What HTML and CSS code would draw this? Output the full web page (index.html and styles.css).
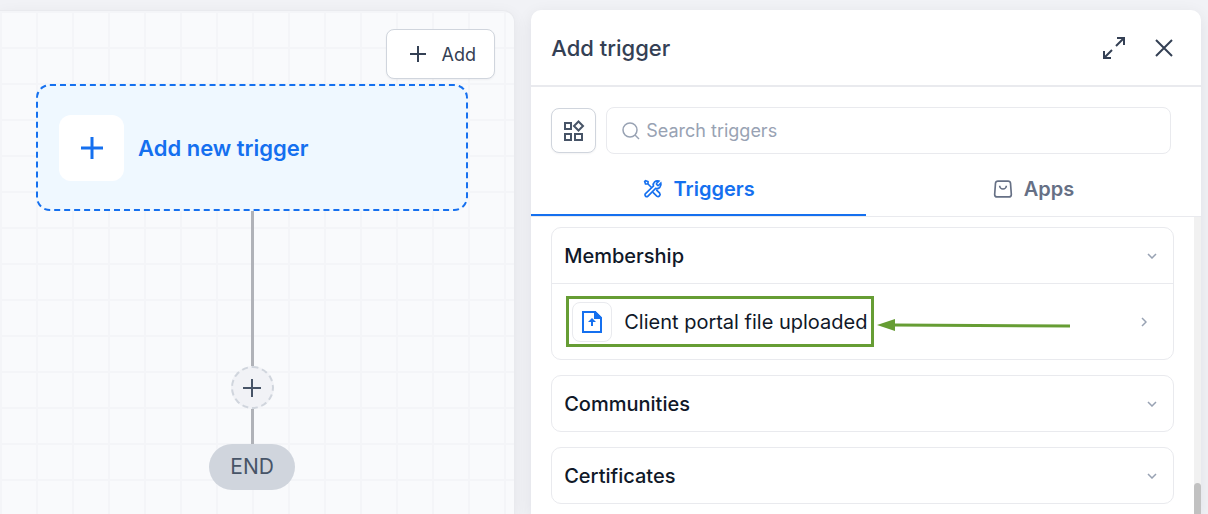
FILE: index.html
```html
<!DOCTYPE html>
<html lang="en">
<head>
  <meta charset="UTF-8" />
  <meta name="viewport" content="width=device-width, initial-scale=1" />
  <title>Workflow Builder</title>
  <link rel="stylesheet" href="styles.css">
</head>
<body>

  <main class="canvas">
    <button class="btn add-btn" type="button">
      <svg width="18" height="18" viewBox="0 0 18 18"><path d="M9 1v16M1 9h16"/></svg>
      Add
    </button>

    <div class="flow">
      <button class="trigger-node" type="button">
        <span class="node-icon">
          <svg width="22" height="22" viewBox="0 0 22 22"><path d="M11 0v22M0 11h22"/></svg>
        </span>
        Add new trigger
      </button>
      <span class="line line-long"></span>
      <button class="step-btn" type="button" aria-label="Add step">
        <svg width="20" height="20" viewBox="0 0 20 20"><path d="M10 1v18M1 10h18"/></svg>
      </button>
      <span class="line line-short"></span>
      <span class="end-node">END</span>
    </div>
  </main>

  <aside class="panel">
    <header class="panel-header">
      <h1>Add trigger</h1>
      <button class="icon-btn" type="button" aria-label="Expand">
        <svg width="22" height="22" viewBox="0 0 22 22"><path d="M13 9l8-8M14 1h7v7M9 13l-8 8M1 14v7h7"/></svg>
      </button>
      <button class="icon-btn" type="button" aria-label="Close">
        <svg width="18" height="18" viewBox="0 0 18 18"><path d="M1 1l16 16M17 1L1 17"/></svg>
      </button>
    </header>

    <div class="search-row">
      <button class="btn filter-btn" type="button" aria-label="Filter by category">
        <svg width="22" height="22" viewBox="0 0 22 22"><path d="M2 3h6v6H2zM2 14h6v6H2zM12 14h7v6h-7zM15.500 1.500L20 6l-4.500 4.500L11 6z"/></svg>
      </button>
      <label class="search">
        <svg width="18" height="18" viewBox="0 0 18 18"><circle cx="8" cy="8" r="7"/><path d="M13 13l4 4"/></svg>
        <input type="text" placeholder="Search triggers" aria-label="Search triggers" />
      </label>
    </div>

    <nav class="tabs">
      <button class="tab active" type="button">
        <svg width="20" height="20" viewBox="0 0 24 24"><path d="M6 6l4.500 4.500M6 6H3L2 3l1-1 3 1v3zM19 2.500l-2.600 2.600a1 1 0 0 0 0 1.400l1 1a1 1 0 0 0 1.400 0l2.600-2.600a5 5 0 0 1-6.300 6.300L6 20.500a2.100 2.100 0 0 1-3-3L12.500 8.500A5 5 0 0 1 19 2.500zM12 16l4.500 4.500a2.500 2.500 0 0 0 3.500-3.500L16 13"/></svg>
        Triggers
      </button>
      <button class="tab" type="button">
        <svg width="20" height="20" viewBox="0 0 24 24"><path d="M16 8a4 4 0 0 1-8 0M6 2.500h12a3 3 0 0 1 3 2.500l1 13.500a3 3 0 0 1-3 3H5a3 3 0 0 1-3-3L3 5a3 3 0 0 1 3-2.500z"/></svg>
        Apps
      </button>
    </nav>

    <div class="panel-body">
      <div class="groups">
        <section class="group">
          <button class="group-title" type="button">
            Membership
            <svg width="10" height="6" viewBox="0 0 10 6"><path d="M1 1l4 4 4-4"/></svg>
          </button>
          <div class="group-item">
            <button class="item-btn" type="button">
              <span class="item-icon">
                <svg width="20" height="22" viewBox="0 0 20 22"><path d="M1 1h12l6 6v14H1z"/><path class="fold" d="M13 1v6h6z"/><path d="M10 15V9"/><path class="tip" d="M6 11l4-4 4 4z"/></svg>
              </span>
              Client portal file uploaded
            </button>
            <svg class="arrow" width="194" height="14" viewBox="0 0 194 14"><path class="head" d="M0 6L18 0v12z"/><path class="shaft" d="M17 6l176 1"/></svg>
            <svg class="next" width="6" height="10" viewBox="0 0 6 10"><path d="M1 1l4 4-4 4"/></svg>
          </div>
        </section>

        <section class="group">
          <button class="group-title" type="button">
            Communities
            <svg width="10" height="6" viewBox="0 0 10 6"><path d="M1 1l4 4 4-4"/></svg>
          </button>
        </section>

        <section class="group">
          <button class="group-title" type="button">
            Certificates
            <svg width="10" height="6" viewBox="0 0 10 6"><path d="M1 1l4 4 4-4"/></svg>
          </button>
        </section>
      </div>
      <div class="scrollbar"><span class="thumb"></span></div>
    </div>
  </aside>

</body>
</html>
```

FILE: styles.css
```css
:root {
  --page: #f1f2f6;
  --canvas: #f9fafc;
  --grid: #f4f5f8;
  --line: #e9eaee;
  --border: #d0d5dd;
  --text: #101828;
  --text-mid: #344054;
  --muted: #667085;
  --placeholder: #98a2b3;
  --accent: #1570ef;
  --accent-bg: #eff8ff;
  --mark: #669d34;
}
* { box-sizing: border-box; margin: 0; padding: 0; }
body {
  height: 100vh;
  overflow: hidden;
  display: grid;
  grid-template-columns: 10fr 13fr;
  gap: 16px;
  padding: 10px 7px 0 0;
  background: var(--page);
  color: var(--text);
  font-family: 'Inter', sans-serif;
  font-size: 20px;
}
button {
  background: none;
  border: none;
  color: inherit;
  font: inherit;
  cursor: pointer;
}
svg {
  flex: none;
  fill: none;
  stroke: currentColor;
  stroke-width: 2;
}
.btn {
  display: flex;
  align-items: center;
  justify-content: center;
  background: #fff;
  border: 1px solid var(--border);
  border-radius: 8px;
  color: var(--text-mid);
  box-shadow: 0 1px 2px rgba(16,24,40,0.05);
}

/* canvas */
.canvas {
  position: relative;
  padding: 73px 46px 0 36px;
  border-top: 1px solid var(--line);
  border-right: 1px solid var(--line);
  border-top-right-radius: 12px;
  background-color: var(--canvas);
  background-image:
    linear-gradient(var(--grid) 2px, transparent 2px),
    linear-gradient(90deg, var(--grid) 2px, transparent 2px);
  background-size: 36px 36px;
  box-shadow: 0 4px 16px rgba(16,24,40,0.06);
}
.add-btn {
  position: absolute;
  top: 18px;
  right: 19px;
  gap: 14px;
  width: 109px;
  height: 50px;
  padding-left: 4px;
  font-size: 18px;
}
.flow {
  display: flex;
  flex-direction: column;
  align-items: center;
}
.trigger-node {
  display: flex;
  align-items: center;
  gap: 14px;
  width: 100%;
  height: 127px;
  padding-left: 21px;
  border: 2px dashed var(--accent);
  border-radius: 14px;
  background: var(--accent-bg);
  color: var(--accent);
  font-size: 22px;
  font-weight: 600;
}
.node-icon {
  display: grid;
  place-items: center;
  width: 65px;
  height: 66px;
  border-radius: 12px;
  background: #fff;
}
.node-icon svg { stroke-width: 3; }
.line {
  width: 3px;
  background: #b0b2b8;
}
.line-long { height: 155px; }
.line-short { height: 35px; }
.step-btn {
  display: grid;
  place-items: center;
  width: 43px;
  height: 43px;
  border: 2px dashed var(--border);
  border-radius: 50%;
  background: var(--page);
  color: #475467;
}
.end-node {
  padding: 0 21px;
  border-radius: 23px;
  background: var(--border);
  color: #475467;
  font-size: 21px;
  line-height: 46px;
}

/* panel */
.panel {
  display: flex;
  flex-direction: column;
  min-height: 0;
  background: #fff;
  border-radius: 10px 10px 0 0;
  box-shadow: 0 4px 16px rgba(16,24,40,0.08);
}
.panel-header {
  display: flex;
  align-items: center;
  gap: 30px;
  height: 77px;
  padding: 0 28px 0 20px;
  border-bottom: 2px solid var(--line);
  color: var(--text-mid);
}
.panel-header h1 {
  flex: 1;
  font-size: 22px;
  font-weight: 500;
}
.icon-btn { display: flex; }
.search-row {
  display: flex;
  align-items: center;
  gap: 10px;
  padding: 20px 30px 0 20px;
}
.filter-btn {
  width: 45px;
  height: 45px;
  color: #475467;
}
.search {
  flex: 1;
  display: flex;
  align-items: center;
  gap: 6px;
  height: 47px;
  padding: 0 15px;
  border: 1px solid var(--line);
  border-radius: 8px;
  color: var(--placeholder);
}
.search svg { stroke-width: 1.5; }
.search input {
  flex: 1;
  min-width: 0;
  border: none;
  outline: none;
  background: none;
  color: var(--text);
  font: inherit;
  font-size: 18px;
}
.search input::placeholder { color: var(--placeholder); }
.tabs {
  display: flex;
  height: 63px;
  border-bottom: 1px solid var(--line);
}
.tab {
  flex: 1;
  display: flex;
  align-items: center;
  justify-content: center;
  gap: 11px;
  padding-top: 9px;
  border-bottom: 2px solid transparent;
  color: var(--muted);
  font-weight: 600;
}
.tab.active {
  border-color: var(--accent);
  color: var(--accent);
}
.panel-body {
  flex: 1;
  display: flex;
  min-height: 0;
}
.groups {
  flex: 1;
  display: flex;
  flex-direction: column;
  gap: 15px;
  padding: 10px 20px 0;
}
.group {
  border: 1px solid var(--line);
  border-radius: 10px;
}
.group-title {
  display: flex;
  align-items: center;
  justify-content: space-between;
  width: 100%;
  height: 55px;
  padding: 0 16px 0 12px;
  font-weight: 500;
}
.group-title svg,
.next {
  color: var(--placeholder);
  stroke-width: 1.5;
}
.group-item {
  display: flex;
  align-items: center;
  height: 76px;
  padding: 0 26px 0 14px;
  border-top: 1px solid var(--line);
}
.item-btn {
  display: flex;
  align-items: center;
  gap: 12px;
  height: 51px;
  padding: 0 4px 0 3px;
  border: 3px solid var(--mark);
}
.item-icon {
  display: grid;
  place-items: center;
  width: 40px;
  height: 40px;
  border: 1px solid var(--line);
  border-radius: 8px;
  color: var(--accent);
}
.fold { fill: currentColor; }
.tip {
  fill: currentColor;
  stroke: none;
}
.arrow {
  margin: 8px auto 0 3px;
  stroke: var(--mark);
}
.head {
  fill: var(--mark);
  stroke: none;
}
.shaft { stroke-width: 3; }
.scrollbar {
  display: flex;
  align-items: flex-end;
  width: 7px;
  background: #f1f1f1;
}
.thumb {
  width: 7px;
  height: 31px;
  border-radius: 4px 4px 0 0;
  background: #c1c1c1;
}
```
